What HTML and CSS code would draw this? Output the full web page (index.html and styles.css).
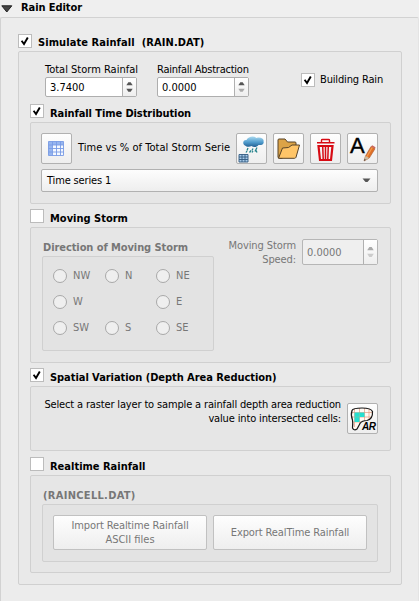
FILE: index.html
```html
<!DOCTYPE html>
<html lang="en">
<head>
<meta charset="utf-8">
<title>Rain Editor</title>
<link rel="stylesheet" href="styles.css">
</head>
<body>
<svg class="defs" width="0" height="0" aria-hidden="true">
  <symbol id="check" viewBox="0 0 14 14"><path d="M3.600 6.800 6 10 9.800 3.600" fill="none" stroke="#000" stroke-width="1.900"/></symbol>
  <symbol id="steps" viewBox="0 0 14 20"><path class="up" d="M3.500 8h7L8.300 4.600H5.700z"/><path class="down" d="M3.500 12h7L8.300 15.400H5.700z"/></symbol>
</svg>
<header class="header">
  <svg width="12" height="8" viewBox="0 0 12 8"><path d="M.8.8h10L5.800 7z" fill="#444" stroke="#222"/></svg>
  <h1 class="t-editor">Rain Editor</h1>
</header>
<main class="editor">
  <div class="title first"><span class="cb"><svg><use href="#check"/></svg></span><b class="t-simulate">Simulate Rainfall&nbsp; (RAIN.DAT)</b></div>
  <section class="group simulate">
    <div class="inputs">
      <label class="field"><span class="t-total">Total Storm Rainfal</span>
        <span class="spin"><span class="value">3.7400</span><svg class="steps"><use href="#steps"/></svg></span></label>
      <label class="field"><span class="t-abs">Rainfall Abstraction</span>
        <span class="spin min"><span class="value">0.0000</span><svg class="steps"><use href="#steps"/></svg></span></label>
      <div class="building"><span class="cb"><svg><use href="#check"/></svg></span><span class="t-building">Building Rain</span></div>
    </div>

    <div class="title"><span class="cb"><svg><use href="#check"/></svg></span><b class="t-dist">Rainfall Time Distribution</b></div>
    <section class="group distribution">
      <div class="tools">
        <button class="tool"><svg viewBox="0 0 31 30">
          <path d="M7.500 7.500h15v14h-15z" fill="#f4f8ff"/><path d="M7.500 7.500h15v3.500H11v10.500H7.500z" fill="#96b5ef"/>
          <path d="M7.500 7.500h15v14h-15zM11.500 7.500v14M15.500 7.500v14M19.500 7.500v14M7.500 11h15M7.500 14.500h15M7.500 18h15" fill="none" stroke="#789be4" stroke-width=".9"/></svg></button>
        <span class="caption"><span class="t-time">Time vs % of Total Storm Serie</span></span>
        <button class="tool"><svg viewBox="0 0 31 30">
          <defs><linearGradient id="cloud" x2="0" y2="1"><stop stop-color="#a9d9ef"/><stop offset=".55" stop-color="#4f9bcc"/><stop offset="1" stop-color="#235f91"/></linearGradient></defs>
          <path d="M9 11.500C6 10 7 5.500 10.500 6 12 2.500 18 1.500 20.500 4c4-1.500 8 1 7 3.500 1 2.500-2 4-5 3.500-2 2.500-5 2.500-7 1-2 1.200-5 1-6.500-.5z" fill="url(#cloud)"/>
          <path d="m12 14-1 2.500M17 14.500l-1 2M21 13.500l-2 4M15 16.500l-1.500 2M11 17l-1 1.500M20 16.500l1 2M17 17l-1 1.500" stroke="#25838c" stroke-width="1.300"/>
          <path d="M3 20.500h9V28H3z" fill="#a8cbea"/><path d="M3 20.500h9V28H3zM6 20.500V28M9 20.500V28M3 23h9M3 25.500h9" fill="none" stroke="#315a80" stroke-width=".9"/></svg></button>
        <button class="tool"><svg viewBox="0 0 31 30"><g stroke="#574328" stroke-width="1" stroke-linejoin="round">
          <path d="M5 23.500V6q0-1 1-1h6l2.500 3H22q1 0 1 1v9L8 24.500z" fill="#dba347"/>
          <path d="M5.500 24.300 9.500 14l6-.5 3.500-2.500h7.500L23 23.300q-.5 1-1.500 1z" fill="#ffc568"/></g></svg></button>
        <button class="tool"><svg viewBox="0 0 31 30"><g fill="none" stroke="#d70b14">
          <path d="M7 8.700h17.500M11.500 8V6.200q0-.7 1-.7h6q1 0 1 .7V8" stroke-width="1.400"/>
          <path d="M8.500 12h14L21 26H10z" stroke-width="2.200"/><path d="M12.700 12l.5 13M18.300 12l-.5 13M15.500 12v13" stroke-width="1.500"/></g></svg></button>
        <button class="tool letter"><span>A</span><svg viewBox="0 0 31 30">
          <path d="m17 27 1.500-5L24 12.500l4 2.300L22.300 24z" fill="#df7127" stroke="#aa562b" stroke-width=".6"/><path d="m24 12.500 1.200-1.200 3.300 1.900-.5 1.600z" fill="#ca655a"/><path d="m19.700 23 5.500-9.500" stroke="#f69a4d" stroke-width="1.300"/><path d="m17 27 1.500-5 3.800 2z" fill="#c9bda5"/><path d="m17 27 .6-1.900 1.300.7z" fill="#333"/></svg></button>
      </div>
      <div class="combo"><span class="t-series">Time series 1</span><svg width="9" height="5" viewBox="0 0 9 5"><path d="M.5.5h8L5.500 4h-2z" fill="#555"/></svg></div>
    </section>

    <div class="title"><span class="cb"></span><b class="t-moving">Moving Storm</b></div>
    <section class="group moving disabled">
      <div class="direction">
        <h2 class="t-direction">Direction of Moving Storm</h2>
        <div class="group compass">
          <span><i></i>NW</span><span><i></i>N</span><span><i></i>NE</span>
          <span><i></i>W</span><span></span><span><i></i>E</span>
          <span><i></i>SW</span><span><i></i>S</span><span><i></i>SE</span>
        </div>
      </div>
      <div class="speed"><span class="t-speed">Moving Storm<br>Speed:</span>
        <span class="spin min"><span class="value">0.0000</span><svg class="steps"><use href="#steps"/></svg></span></div>
    </section>

    <div class="title"><span class="cb"><svg><use href="#check"/></svg></span><b class="t-spatial">Spatial Variation (Depth Area Reduction)</b></div>
    <section class="group spatial">
      <p><span class="t-select">Select a raster layer to sample a rainfall depth area reduction</span><br><span class="t-value">value into intersected cells:</span></p>
      <button class="tool ar"><svg viewBox="0 0 31 30">
        <path d="M5 6.500Q6 4 15 4t10.500 3.500Q26 15 20 16.500q-5 0-7 3L10 25q-3 2-4.500-1 .5-5 0-8-2-5-.5-9.500z" fill="#fffaf4"/>
        <path d="M4.500 8.500H25M5 13h20M6 18h8M7.500 5v18M12.500 4v16M17.500 4v12.500M22 5v10" fill="none" stroke="#e49a80" stroke-width=".7"/>
        <path d="M7.500 8.500h10v4.500h-5v5h-5z" fill="#25dfd0"/><path d="M7.500 13h5V8.500" fill="none" stroke="#7fc9a5" stroke-width=".6"/>
        <path d="M5 6.500Q6 4 15 4t10.500 3.500Q26 15 20 16.500q-5 0-7 3L10 25q-3 2-4.500-1 .5-5 0-8-2-5-.5-9.500z" fill="none" stroke="#171717" stroke-width="1.200"/></svg><span>AR</span></button>
    </section>

    <div class="title"><span class="cb"></span><b class="t-realtime">Realtime Rainfall</b></div>
    <section class="group realtime disabled">
      <h2 class="t-raincell">(RAINCELL.DAT)</h2>
      <div class="group files">
        <button><span class="t-import">Import Realtime Rainfall</span><span class="t-ascii">ASCII files</span></button>
        <button><span class="t-export">Export RealTime Rainfall</span></button>
      </div>
    </section>
  </section>
</main>
</body>
</html>
```
FILE: styles.css
```css
* { box-sizing: border-box; }
body { margin: 0; width: 419px; height: 601px; overflow: hidden; background: #efefef; color: #000;
  font: 11px/14px "DejaVu Sans Condensed", "DejaVu Sans", sans-serif; font-stretch: condensed; white-space: nowrap; }
.defs { display: block; }
button { font: inherit; color: inherit; padding: 0; }
h1, h2 { margin: 0; font-size: 11px; line-height: 14px; font-weight: bold; }
svg { display: block; }
.header { height: 17px; display: flex; align-items: flex-start; padding-left: 1px; }
.header svg { margin-top: 5px; }
.header h1 { margin: 1px 0 0 8px; }
.editor { height: 590px; border: 1px solid #d2d2d2; border-right-color: #e4e4e4; background: #ececec; padding: 16px 16px 0 17px; border-radius: 2px; }
.group { border: 1px solid #d0d0d0; border-radius: 2px; }
.title { display: flex; height: 18px; }
.title b { margin: 3px 0 0 6px; }
.first b { margin-top: 2px; }
.cb { width: 14px; height: 14px; flex: none; border: 1px solid #bcbcbc; background: #fff; }
.cb svg { width: 14px; height: 14px; margin: -1px; }
.simulate { height: 534px; width: 384px; margin-top: -1px; padding: 10px 11px; background: #e9e9e9; }
.inputs { display: flex; gap: 20px; height: 42px; padding-left: 15px; }
.field { width: 92px; display: flex; flex-direction: column; }
.field > span:first-child { height: 15px; padding-top: 1px; }
.spin { display: flex; height: 20px; width: 92px; border: 1px solid #aeaeae; border-radius: 2px; background: #fff; }
.value { flex: 1; padding: 3px 0 0 4px; line-height: 14px; }
.steps { width: 14px; height: 100%; border-left: 1px solid #b0b0b0; background: linear-gradient(#fff, #eee); fill: #555; }
.min .steps { --down: #aaa; }
.down { fill: var(--down, #555); }
.building { display: flex; gap: 5px; margin: 11px 0 0 32px; }
.distribution { height: 82px; width: 361px; padding: 10px 12px 10px 10px; background: #e6e6e6; }
.tools { display: flex; gap: 6px; }
.tool { position: relative; width: 31px; height: 31px; flex: none; border: 1px solid #b1b1b1; border-radius: 2px; background: linear-gradient(#fefefe, #eeeeee); }
.tool svg { width: 31px; height: 30px; margin: -1px; }
.caption { width: 152px; padding-top: 8px; flex: none; }
.letter span { position: absolute; left: 2px; top: 1px; font: 22px/22px "Liberation Sans", sans-serif; -webkit-text-stroke: .4px #000; }
.letter svg { position: relative; }
.combo { height: 23px; margin-top: 5px; border: 1px solid #b1b1b1; border-radius: 2px; background: linear-gradient(#fdfdfd, #eee); display: flex; align-items: center; justify-content: space-between; padding: 0 6px 0 5px; }
.distribution + .title { margin-top: 5px; }
.moving { width: 361px; height: 136px; padding: 12px 12px 12px 11px; display: flex; justify-content: space-between; background: #e6e6e6; }
.disabled { color: #777; }
.direction h2 { padding: 1px 0 0 1px; }
.compass { width: 172px; height: 95px; margin-top: 1px; padding: 12px 0 0 10px; display: grid; grid-template: repeat(3, 26px) / 52px 51px 1fr; background: #e3e3e3; }
.compass span { display: flex; gap: 6px; }
.compass i { width: 14px; height: 14px; border: 1px solid #a8a8a8; border-radius: 50%; background: #efefef; }
.speed { display: flex; gap: 6px; text-align: right; margin-top: -1px; }
.speed .spin { width: 76px; height: 26px; text-align: left; background: #efefef; border-color: #b6b6b6; }
.speed .value { padding-top: 6px; }
.speed .steps { fill: #aaa; --down: #ccc; }
.moving + .title { margin-top: 5px; }
.spatial { width: 361px; height: 65px; padding: 11px 12px 0 11px; display: flex; justify-content: flex-end; gap: 6px; background: #e6e6e6; }
.spatial p { margin: 0; text-align: right; }
.spatial .tool { margin-top: 5px; }
.ar span { position: absolute; left: 14px; bottom: 1px; font: italic bold 10px/10px "Liberation Sans", sans-serif; letter-spacing: -.5px; }
.spatial + .title { margin-top: 6px; }
.realtime { width: 361px; height: 98px; padding: 12px 12px 12px 11px; background: #e6e6e6; }
.realtime h2 { padding: 1px 0 0 1px; }
.files { display: flex; gap: 6px; height: 58px; margin-top: 1px; padding: 10px; background: #e3e3e3; }
.files button { width: 154px; height: 35px; display: flex; flex-direction: column; align-items: center; justify-content: center; border: 1px solid #c1c1c1; border-radius: 2px; background: linear-gradient(#fefefe, #eee); }
.t-editor { letter-spacing: -.07px; }
.t-simulate { letter-spacing: .08px; }
.t-abs { letter-spacing: -.24px; }
.t-time { letter-spacing: .04px; }
.t-building, .t-series, .t-select, .t-value { letter-spacing: -.15px; }
.t-dist, .t-direction { letter-spacing: -.08px; }
.t-spatial { letter-spacing: -.05px; }
.t-speed, .t-import, .t-export { letter-spacing: -.1px; }
.t-raincell { letter-spacing: .3px; }
```
